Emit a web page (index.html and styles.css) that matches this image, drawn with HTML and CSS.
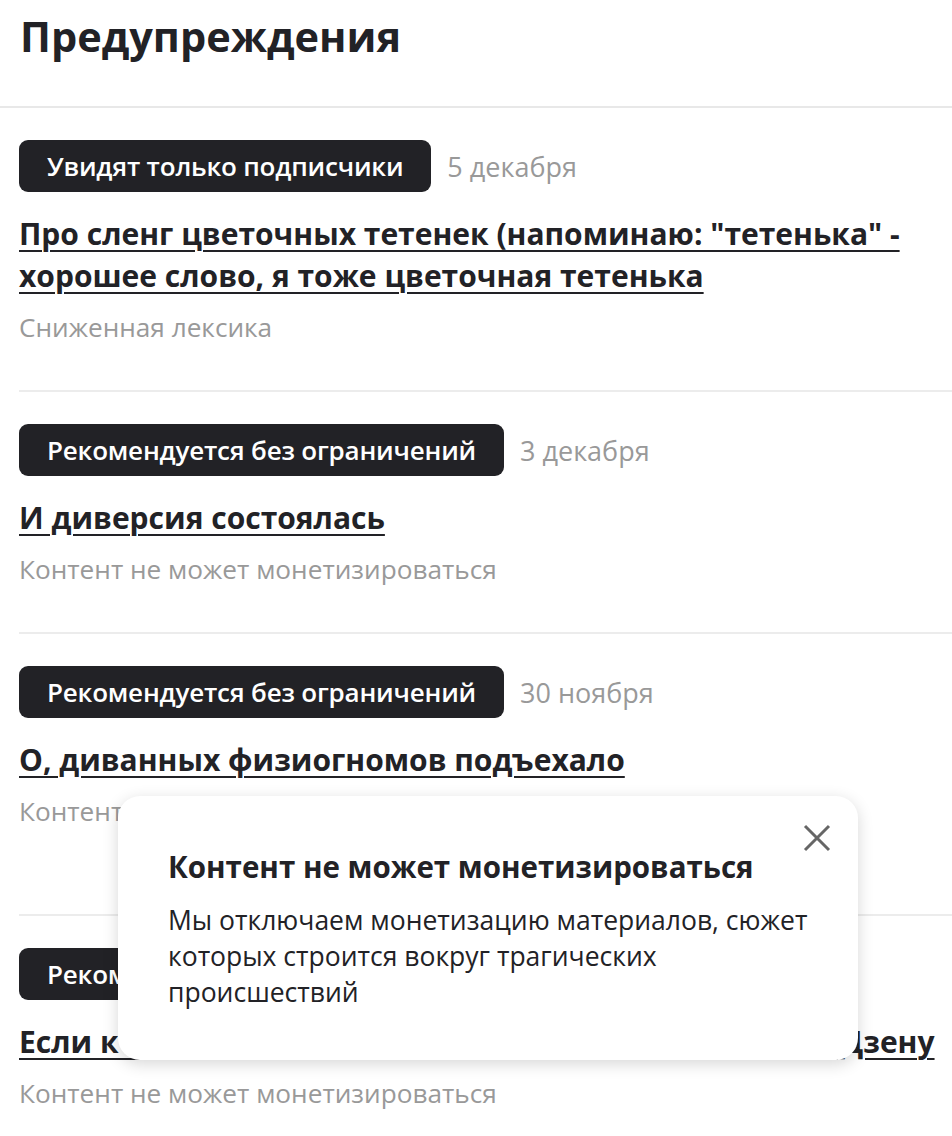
FILE: index.html
```html
<!DOCTYPE html>
<html lang="ru">
<head>
<meta charset="utf-8">
<title>Предупреждения</title>
<link rel="stylesheet" href="styles.css">
</head>
<body>
<main class="page">
  <header class="page-header">
    <h1 class="page-title">Предупреждения</h1>
  </header>
  <ul class="warnings">
    <li class="warning">
      <div class="warning-head">
        <span class="badge">Увидят только подписчики</span>
        <span class="date">5 декабря</span>
      </div>
      <a class="warning-title" href="#">Про сленг цветочных тетенек (напоминаю: "тетенька" - хорошее слово, я тоже цветочная тетенька</a>
      <p class="warning-reason">Сниженная лексика</p>
    </li>
    <li class="warning">
      <div class="warning-head">
        <span class="badge">Рекомендуется без ограничений</span>
        <span class="date">3 декабря</span>
      </div>
      <a class="warning-title" href="#">И диверсия состоялась</a>
      <p class="warning-reason">Контент не может монетизироваться</p>
    </li>
    <li class="warning warning--active">
      <div class="warning-head">
        <span class="badge">Рекомендуется без ограничений</span>
        <span class="date">30 ноября</span>
      </div>
      <a class="warning-title" href="#">О, диванных физиогномов подъехало</a>
      <p class="warning-reason">Контент не может монетизироваться</p>
    </li>
    <li class="warning">
      <div class="warning-head">
        <span class="badge">Рекомендуется без ограничений</span>
        <span class="date">28 ноября</span>
      </div>
      <a class="warning-title" href="#">Если кто-то ещё не понял, о чём я пишу в блогах по Дзену</a>
      <p class="warning-reason">Контент не может монетизироваться</p>
    </li>
  </ul>

  <div class="popover" role="dialog">
    <button class="popover-close" aria-label="Закрыть">
      <svg width="28" height="28" viewBox="0 0 28 28"><path d="M2 2L26 26M26 2L2 26" stroke="#666" stroke-width="3" fill="none"/></svg>
    </button>
    <h2 class="popover-title">Контент не может монетизироваться</h2>
    <p class="popover-text">Мы отключаем монетизацию материалов, сюжет которых строится вокруг трагических происшествий</p>
  </div>
</main>
</body>
</html>
```

FILE: styles.css
```css
* { box-sizing: border-box; }
html, body { margin: 0; padding: 0; background: #fff; }
body {
  font-family: "Open Sans", "Noto Sans", sans-serif;
  color: #222226;
  overflow: hidden;
}
.page { position: relative; width: 952px; height: 1136px; overflow: hidden; }

.page-header {
  height: 108px;
  border-bottom: 2px solid #e8e8e8;
  padding: 9px 20px 0;
}
.page-title {
  margin: 0;
  font-size: 41.5px;
  line-height: 54px;
  font-weight: 700;
}

.warnings {
  list-style: none;
  margin: 0 0 0 19px;
  padding: 0;
}
.warning {
  padding: 32px 0 47px;
  border-bottom: 2px solid #ececec;
}
.warning--active { padding-bottom: 87px; }
.warning-head {
  display: flex;
  align-items: center;
  gap: 16px;
}
.badge {
  display: inline-flex;
  align-items: center;
  height: 52px;
  padding: 0 28px;
  background: #222226;
  color: #fff;
  border-radius: 9px;
  font-size: 26px;
  font-weight: 600;
  letter-spacing: -0.2px;
}
.date {
  font-size: 27px;
  color: #999;
}
.warning-title {
  display: block;
  margin-top: 21px;
  font-size: 30px;
  line-height: 42px;
  font-weight: 700;
  color: #222226;
  text-decoration: underline;
  text-decoration-thickness: 2px;
  text-underline-offset: 5px;
}
.warning-reason {
  margin: 14px 0 0;
  font-size: 26.2px;
  line-height: 32px;
  color: #999;
}

.popover {
  position: absolute;
  left: 118px;
  top: 796px;
  width: 740px;
  height: 264px;
  background: #fff;
  border-radius: 22px;
  box-shadow: 0 4px 16px rgba(0,0,0,0.16);
  padding: 50px 40px 0 50px;
}
.popover-close {
  position: absolute;
  top: 28px;
  right: 27px;
  width: 28px;
  height: 28px;
  padding: 0;
  border: 0;
  background: none;
}
.popover-close svg { display: block; }
.popover-title {
  margin: 0;
  font-size: 29.5px;
  line-height: 42px;
  font-weight: 700;
}
.popover-text {
  margin: 14px 0 0;
  font-size: 26.5px;
  line-height: 36px;
  color: #222226;
}
```
